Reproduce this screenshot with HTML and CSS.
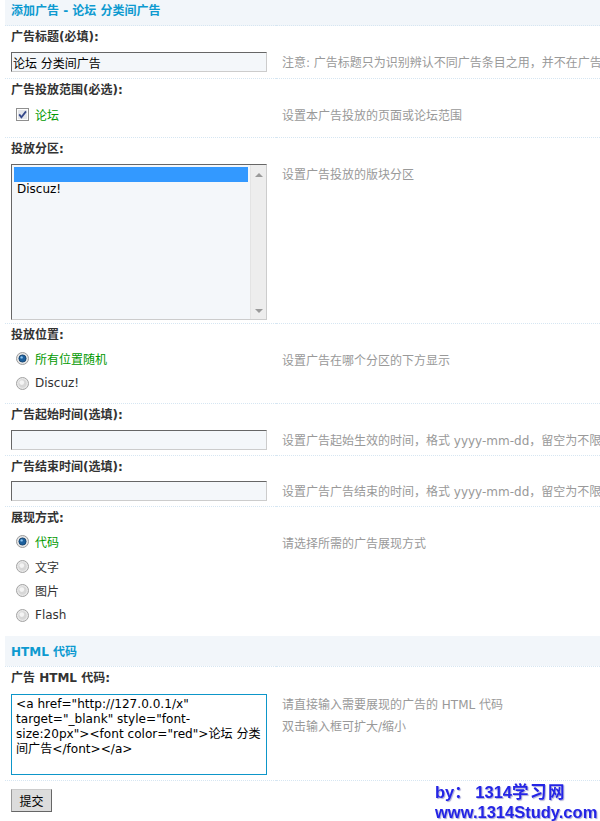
FILE: index.html
```html
<!DOCTYPE html>
<html lang="zh-CN">
<head>
  <meta charset="UTF-8" />
  <title>添加广告 - 论坛 分类间广告</title>
  <link rel="stylesheet" href="styles.css">
</head>
<body>

  <div class="wrap">
    <table class="tb">
      <colgroup><col class="col-form"><col></colgroup>

      <!-- title -->
      <tr class="partition first"><th colspan="2">添加广告 - 论坛 分类间广告</th></tr>

      <tr class="label"><td colspan="2">广告标题(必填):</td></tr>
      <tr class="row row-title">
        <td><input class="txt" type="text" value="论坛 分类间广告"></td>
        <td class="tips">注意: 广告标题只为识别辨认不同广告条目之用，并不在广告中显示</td>
      </tr>

      <tr class="label"><td colspan="2">广告投放范围(必选):</td></tr>
      <tr class="row row-check">
        <td>
          <ul class="opts">
            <li class="checked">
              <svg class="box" width="13" height="13" viewBox="0 0 13 13">
                <rect x="0.5" y="0.5" width="12" height="12" fill="#f2f2f2" stroke="#8f8f8f"/>
                <rect x="1.5" y="1.5" width="10" height="10" fill="#e4e6ea" stroke="#fdfdfd"/>
                <path d="M3.2 6.4 L5.4 9.2 L10 3.4" fill="none" stroke="#35488a" stroke-width="1.8"/>
              </svg>论坛
            </li>
          </ul>
        </td>
        <td class="tips">设置本广告投放的页面或论坛范围</td>
      </tr>

      <tr class="label"><td colspan="2">投放分区:</td></tr>
      <tr class="row row-select">
        <td>
          <div class="listbox">
            <div class="list-opts">
              <div class="list-opt selected">&nbsp;</div>
              <div class="list-opt">Discuz!</div>
            </div>
            <div class="scrollbar">
              <span class="arrow up"></span>
              <span class="arrow down"></span>
            </div>
          </div>
        </td>
        <td class="tips">设置广告投放的版块分区</td>
      </tr>

      <tr class="label"><td colspan="2">投放位置:</td></tr>
      <tr class="row row-radio">
        <td>
          <ul class="opts">
            <li class="checked">
              <svg class="radio" width="13" height="13" viewBox="0 0 13 13">
                <circle cx="6.5" cy="6.5" r="6" fill="#e6e6e6" stroke="#9c9c9c"/>
                <circle cx="6.5" cy="6.5" r="3.6" fill="#1c5f9c" stroke="#0d3a66" stroke-width="0.8"/>
                <circle cx="5.6" cy="5.4" r="1.2" fill="#8cc4f0"/>
              </svg>所有位置随机
            </li>
            <li>
              <svg class="radio" width="13" height="13" viewBox="0 0 13 13">
                <circle cx="6.5" cy="6.5" r="6" fill="#e8e8e8" stroke="#a3a3a3"/>
                <circle cx="6.5" cy="6.5" r="4.2" fill="#d7d7d7"/>
                <circle cx="5.8" cy="5.6" r="2.4" fill="#f4f4f4"/>
              </svg>Discuz!
            </li>
          </ul>
        </td>
        <td class="tips">设置广告在哪个分区的下方显示</td>
      </tr>

      <tr class="label"><td colspan="2">广告起始时间(选填):</td></tr>
      <tr class="row">
        <td><input class="txt" type="text" value=""></td>
        <td class="tips">设置广告起始生效的时间，格式 yyyy-mm-dd，留空为不限制起始时间</td>
      </tr>

      <tr class="label"><td colspan="2">广告结束时间(选填):</td></tr>
      <tr class="row row-end">
        <td><input class="txt" type="text" value=""></td>
        <td class="tips">设置广告广告结束的时间，格式 yyyy-mm-dd，留空为不限制结束时间</td>
      </tr>

      <tr class="label"><td colspan="2">展现方式:</td></tr>
      <tr class="row row-style">
        <td>
          <ul class="opts">
            <li class="checked">
              <svg class="radio" width="13" height="13" viewBox="0 0 13 13">
                <circle cx="6.5" cy="6.5" r="6" fill="#e6e6e6" stroke="#9c9c9c"/>
                <circle cx="6.5" cy="6.5" r="3.6" fill="#1c5f9c" stroke="#0d3a66" stroke-width="0.8"/>
                <circle cx="5.6" cy="5.4" r="1.2" fill="#8cc4f0"/>
              </svg>代码
            </li>
            <li>
              <svg class="radio" width="13" height="13" viewBox="0 0 13 13">
                <circle cx="6.5" cy="6.5" r="6" fill="#e8e8e8" stroke="#a3a3a3"/>
                <circle cx="6.5" cy="6.5" r="4.2" fill="#d7d7d7"/>
                <circle cx="5.8" cy="5.6" r="2.4" fill="#f4f4f4"/>
              </svg>文字
            </li>
            <li>
              <svg class="radio" width="13" height="13" viewBox="0 0 13 13">
                <circle cx="6.5" cy="6.5" r="6" fill="#e8e8e8" stroke="#a3a3a3"/>
                <circle cx="6.5" cy="6.5" r="4.2" fill="#d7d7d7"/>
                <circle cx="5.8" cy="5.6" r="2.4" fill="#f4f4f4"/>
              </svg>图片
            </li>
            <li>
              <svg class="radio" width="13" height="13" viewBox="0 0 13 13">
                <circle cx="6.5" cy="6.5" r="6" fill="#e8e8e8" stroke="#a3a3a3"/>
                <circle cx="6.5" cy="6.5" r="4.2" fill="#d7d7d7"/>
                <circle cx="5.8" cy="5.6" r="2.4" fill="#f4f4f4"/>
              </svg>Flash
            </li>
          </ul>
        </td>
        <td class="tips">请选择所需的广告展现方式</td>
      </tr>

      <!-- html code -->
      <tr class="partition"><th colspan="2">HTML 代码</th></tr>

      <tr class="label"><td colspan="2">广告 HTML 代码:</td></tr>
      <tr class="row row-code">
        <td><textarea class="code">&lt;a href="http://127.0.0.1/x" target="_blank" style="font-size:20px"&gt;&lt;font color="red"&gt;论坛 分类间广告&lt;/font&gt;&lt;/a&gt;</textarea></td>
        <td class="tips">请直接输入需要展现的广告的 HTML 代码<br>双击输入框可扩大/缩小</td>
      </tr>

      <tr class="submit-row"><td colspan="2"><button class="btn" type="submit">提交</button></td></tr>
    </table>
  </div>

  <div class="mark">
    <div>by：&nbsp;1314<span class="cn">学习网</span></div>
    <div>www.1314Study.com</div>
  </div>

</body>
</html>
```

FILE: styles.css
```css
body {
  margin: 0;
  background: #fff;
  font: 12px "DejaVu Sans", "Noto Sans CJK SC", sans-serif;
  color: #333;
  overflow: hidden;
}

.wrap {
  padding-left: 5px;
}

.tb {
  width: 100%;
  border-collapse: collapse;
  table-layout: fixed;
}

.col-form {
  width: 271px;
}

.tb td, .tb th {
  padding: 0 0 0 6px;
  text-align: left;
  vertical-align: top;
}

.partition th {
  background: #f2f6fa;
  color: #0d9ad0;
  font-weight: bold;
  line-height: 18px;
  padding: 7px 6px 5px;
}

.partition.first th {
  padding: 2px 6px 5px;
}

.label td {
  border-top: 1px dotted #d6e6f2;
  font-weight: bold;
  line-height: 18px;
  padding: 2px 6px 3px;
  color: #333;
}

.row td {
  padding-top: 3px;
  padding-bottom: 5px;
}

.row-title td { padding-bottom: 6px; }
.row-check td { padding-top: 0; padding-bottom: 10px; }
.row-select td { padding-bottom: 3px; }
.row-radio td { padding-top: 0; padding-bottom: 7px; }
.row-end td { padding-top: 2px; }
.row-style td { padding-top: 0; padding-bottom: 8px; }
.row-code td { padding-top: 4px; }

.tb td.tips {
  color: #999;
  line-height: 22px;
  padding-bottom: 0;
  white-space: nowrap;
  overflow: hidden;
}

.row-check td.tips, .row-radio td.tips, .row-style td.tips {
  padding-top: 3px;
}

.txt {
  display: block;
  box-sizing: border-box;
  width: 256px;
  height: 20px;
  margin: 0;
  padding: 0 1px;
  border: 1px solid;
  border-color: #666 #ccc #ccc #666;
  background: #f4f7fa;
  font: 12px "DejaVu Sans", "Noto Sans CJK SC", sans-serif;
  color: #000;
}

.opts {
  list-style: none;
  margin: 0;
  padding: 0;
}

.opts li {
  display: flex;
  align-items: center;
  height: 24.5px;
  padding-left: 5px;
  color: #333;
}

.opts li.checked {
  color: #090;
}

.opts svg {
  margin-right: 6px;
  flex: none;
}

.listbox {
  display: flex;
  box-sizing: border-box;
  width: 256px;
  height: 156px;
  border: 1px solid;
  border-color: #666 #ccc #ccc #666;
  background: #f4f7fa;
}

.list-opts {
  flex: 1;
  padding: 2px;
}

.list-opt {
  height: 15px;
  line-height: 15px;
  padding-left: 3px;
  color: #000;
}

.list-opt.selected {
  background: #3399ff;
}

.scrollbar {
  width: 15px;
  display: flex;
  flex-direction: column;
  justify-content: space-between;
  align-items: center;
  padding: 8px 0 6px;
  background: #ededed;
  border-left: 1px solid #e3e3e3;
}

.arrow {
  width: 0;
  height: 0;
  border-left: 4px solid transparent;
  border-right: 4px solid transparent;
}

.arrow.up {
  border-bottom: 4px solid #9a9a9a;
}

.arrow.down {
  border-top: 4px solid #9a9a9a;
}

.code {
  display: block;
  box-sizing: border-box;
  width: 256px;
  height: 81px;
  margin: 0;
  padding: 2px 3px 2px 4px;
  border: 1px solid #0d96c9;
  background: #fff;
  font: 12.1px/15px "DejaVu Sans", "Noto Sans CJK SC", sans-serif;
  color: #000;
  resize: none;
  overflow: hidden;
}

.submit-row td {
  border-top: 1px dotted #d6e6f2;
  padding: 8px 0 0 6px;
}

.btn {
  display: block;
  width: 41px;
  height: 23px;
  margin: 0;
  padding: 0;
  background: #dcdcdc;
  border: 1px solid;
  border-color: #ccc #666 #666 #999;
  font: 12px "DejaVu Sans", "Noto Sans CJK SC", sans-serif;
  color: #000;
}

.mark {
  position: fixed;
  left: 435px;
  bottom: -1px;
  font: bold 16.5px/20px "Liberation Sans", "Noto Sans CJK SC", sans-serif;
  color: #2424e6;
  text-shadow: 1px 1px 1px #a9a9d6;
  white-space: nowrap;
}

.mark .cn {
  letter-spacing: 1.5px;
}
```
